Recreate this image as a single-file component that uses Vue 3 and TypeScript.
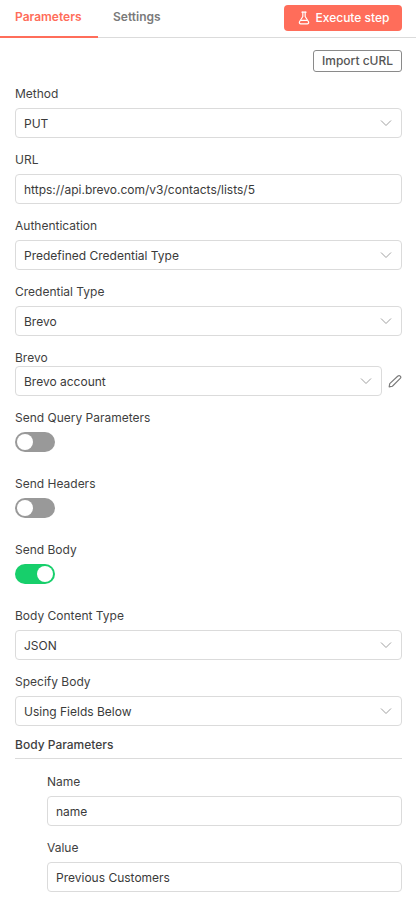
<script setup lang="ts">
interface Field { label: string; value: string; kind: 'select' | 'input' }
const top: Field[] = [
  { label: 'Method', value: 'PUT', kind: 'select' },
  { label: 'URL', value: 'https://api.brevo.com/v3/contacts/lists/5', kind: 'input' },
  { label: 'Authentication', value: 'Predefined Credential Type', kind: 'select' },
  { label: 'Credential Type', value: 'Brevo', kind: 'select' },
]
const toggles = [
  { label: 'Send Query Parameters', on: false },
  { label: 'Send Headers', on: false },
  { label: 'Send Body', on: true },
]
const body: Field[] = [
  { label: 'Body Content Type', value: 'JSON', kind: 'select' },
  { label: 'Specify Body', value: 'Using Fields Below', kind: 'select' },
]
const params: Field[] = [
  { label: 'Name', value: 'name', kind: 'input' },
  { label: 'Value', value: 'Previous Customers', kind: 'input' },
]
</script>

<template>
  <div class="panel">
    <header class="tabs">
      <div class="tab active">Parameters</div>
      <div class="tab">Settings</div>
      <button class="exec">
        <svg width="14" height="14" viewBox="0 0 24 24" fill="none" stroke="currentColor" stroke-width="2" stroke-linecap="round" stroke-linejoin="round">
          <path d="M10 2v7.5L4.3 18.5A2.3 2.3 0 0 0 6.3 22h11.4a2.3 2.3 0 0 0 2-3.5L14 9.5V2" />
          <path d="M8.5 2h7" />
          <path d="M7 16h10" />
        </svg>
        <span>Execute step</span>
      </button>
    </header>

    <main class="content">
      <div class="import-row"><button class="import">Import cURL</button></div>

      <div v-for="f in top" :key="f.label" class="field">
        <div class="label">{{ f.label }}</div>
        <div class="box">
          <span>{{ f.value }}</span>
          <svg v-if="f.kind === 'select'" class="chev" width="12" height="12" viewBox="0 0 12 12" fill="none" stroke="currentColor" stroke-width="1">
            <path d="M1 3.5l5 5 5-5" />
          </svg>
        </div>
      </div>

      <div class="cred">
        <div class="label short">Brevo</div>
        <div class="cred-row">
          <div class="box grow">
            <span>Brevo account</span>
            <svg class="chev" width="12" height="12" viewBox="0 0 12 12" fill="none" stroke="currentColor" stroke-width="1">
              <path d="M1 3.5l5 5 5-5" />
            </svg>
          </div>
          <svg class="pencil" width="14" height="14" viewBox="0 0 24 24" fill="none" stroke="currentColor" stroke-width="2" stroke-linecap="round" stroke-linejoin="round">
            <path d="M17 3.5a2.8 2.8 0 0 1 4 4L7.5 21 2 22l1-5.5z" />
          </svg>
        </div>
      </div>

      <div v-for="t in toggles" :key="t.label" class="toggle-field">
        <div class="label">{{ t.label }}</div>
        <div class="switch" :class="{ on: t.on }"><i class="knob"></i></div>
      </div>

      <div v-for="f in body" :key="f.label" class="field">
        <div class="label">{{ f.label }}</div>
        <div class="box">
          <span>{{ f.value }}</span>
          <svg class="chev" width="12" height="12" viewBox="0 0 12 12" fill="none" stroke="currentColor" stroke-width="1">
            <path d="M1 3.5l5 5 5-5" />
          </svg>
        </div>
      </div>

      <div class="section">Body Parameters</div>
      <div class="nested">
        <div v-for="f in params" :key="f.label" class="field">
          <div class="label">{{ f.label }}</div>
          <div class="box"><span>{{ f.value }}</span></div>
        </div>
      </div>
    </main>
  </div>
</template>

<style scoped>
.panel {
  width: 416px;
  height: 910px;
  overflow: hidden;
  background: #fff;
  font-family: Inter, "Liberation Sans", sans-serif;
  font-size: 13px;
  color: #333;
}
.tabs {
  height: 38px;
  box-sizing: border-box;
  border-bottom: 1px solid #dbdbdb;
  display: flex;
  align-items: flex-start;
  padding-right: 14px;
}
.tab {
  height: 35px;
  padding: 9px 15px 0;
  box-sizing: border-box;
  font-size: 12px;
  line-height: 16px;
  font-weight: 600;
  color: #7a7a7a;
}
.tab.active {
  width: 98px;
  height: 38px;
  color: #ff6d5a;
  border-bottom: 2px solid #ff6d5a;
}
.exec {
  margin: 5px 0 0 auto;
  width: 118px;
  height: 26px;
  border: 0;
  border-radius: 4px;
  background: #ff6d5a;
  color: #fff;
  font: 500 12px/16px Inter, "Liberation Sans", sans-serif;
  display: flex;
  align-items: center;
  justify-content: center;
  gap: 5px;
  padding: 0;
}
.content {
  padding: 0 14px 0 15px;
}
.import-row {
  display: flex;
  justify-content: flex-end;
  padding-top: 12px;
  height: 48px;
  box-sizing: border-box;
  margin-bottom: 0;
}
.import {
  width: 89px;
  height: 22px;
  box-sizing: border-box;
  border: 1px solid #8a8a8a;
  border-radius: 3px;
  background: #fff;
  color: #555;
  font: 500 12px/16px Inter, "Liberation Sans", sans-serif;
  padding: 0;
}
.label {
  height: 22px;
  box-sizing: border-box;
  padding-top: 0;
  font-size: 12px;
  line-height: 16px;
  color: #3f3f3f;
}
.field {
  margin-bottom: 14px;
}
.box {
  height: 30px;
  box-sizing: border-box;
  border: 1px solid #dbdbdb;
  border-radius: 4px;
  padding: 0 8px;
  display: flex;
  align-items: center;
  justify-content: space-between;
  font-size: 12px;
  color: #3a3a3a;
}
.chev {
  color: #a0a0a0;
  margin-right: 1px;
}
.cred {
  margin-bottom: 14px;
}
.label.short {
  height: 16px;
}
.cred-row {
  display: flex;
  align-items: center;
  gap: 6px;
}
.grow {
  flex: 1;
}
.pencil {
  color: #7a7a7a;
  flex: none;
}
.toggle-field {
  height: 66px;
}
.switch {
  width: 40px;
  height: 20px;
  border-radius: 10px;
  background: #999;
  position: relative;
}
.switch.on {
  background: #17cf6b;
}
.knob {
  position: absolute;
  top: 2px;
  left: 2px;
  width: 16px;
  height: 16px;
  border-radius: 50%;
  background: #fff;
}
.switch.on .knob {
  left: 22px;
}
.section {
  height: 22px;
  box-sizing: border-box;
  margin-top: -3px;
  border-bottom: 1px solid #dbdbdb;
  font-size: 12px;
  line-height: 16px;
  font-weight: 500;
  color: #3f3f3f;
  margin-bottom: 15px;
}
.nested {
  padding-left: 32px;
}
</style>

<style>
html, body { margin: 0; background: #fff; }
</style>
